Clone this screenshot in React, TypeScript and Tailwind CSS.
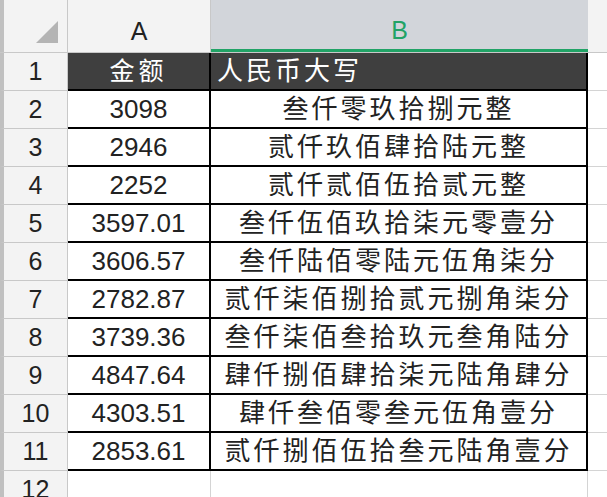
const rows: [string, string][] = [
  ["3098", "叁仟零玖拾捌元整"],
  ["2946", "贰仟玖佰肆拾陆元整"],
  ["2252", "贰仟贰佰伍拾贰元整"],
  ["3597.01", "叁仟伍佰玖拾柒元零壹分"],
  ["3606.57", "叁仟陆佰零陆元伍角柒分"],
  ["2782.87", "贰仟柒佰捌拾贰元捌角柒分"],
  ["3739.36", "叁仟柒佰叁拾玖元叁角陆分"],
  ["4847.64", "肆仟捌佰肆拾柒元陆角肆分"],
  ["4303.51", "肆仟叁佰零叁元伍角壹分"],
  ["2853.61", "贰仟捌佰伍拾叁元陆角壹分"],
];

export default function App() {
  const font = { fontFamily: '"Liberation Sans", "Noto Sans CJK SC", sans-serif' };
  return (
    <div className="w-[607px] h-[497px] overflow-hidden bg-white text-[25px] text-[#222]" style={font}>
      <div className="flex h-[53px] bg-[#f3f3f3] border-b border-[#c8c8c8]">
        <div className="w-[68px] border-r border-[#c8c8c8] border-l-4 border-l-[#c0c0c0] relative">
          <div className="absolute right-[9px] bottom-[9px] w-0 h-0 border-l-[22px] border-l-transparent border-b-[22px] border-b-[#b4b4b4]" />
        </div>
        <div className="w-[143px] border-r border-[#c8c8c8] flex items-end justify-center pb-[8px] leading-none">A</div>
        <div className="w-[377px] bg-[#d2d5da] border-b-[3px] border-[#21a366] flex items-end justify-center pb-[6px] text-[#21a366] leading-none">B</div>
        <div className="flex-1" />
      </div>
      {[0, ...rows.map((_, i) => i + 1), 11].map((i) => {
        const header = i === 0;
        const r = i >= 1 && i <= 10 ? rows[i - 1] : null;
        const empty = i === 11;
        return (
          <div key={i} className="flex h-[38px] leading-[36px]">
            <div className="w-[68px] bg-[#f3f3f3] border-r border-b border-[#c8c8c8] border-l-4 border-l-[#c0c0c0] text-center">{i + 1}</div>
            {empty ? (
              <>
                <div className="w-[143px] border-r border-b border-[#d4d4d4]" />
                <div className="w-[377px] border-r border-b border-[#d4d4d4]" />
              </>
            ) : (
              <>
                <div className={`w-[143px] border-b-2 border-black border-r-2 text-center ${header ? "bg-[#3f3f3f] text-white tracking-[4px]" : "text-[26px]"}`}>
                  {header ? "金额" : r![0]}
                </div>
                <div className={`w-[377px] border-b-2 border-r-2 border-black whitespace-nowrap text-[26px] tracking-[3px] ${header ? "bg-[#3f3f3f] text-white pl-[6px]" : "text-center"}`}>
                  {header ? "人民币大写" : r![1]}
                </div>
              </>
            )}
            <div className="flex-1 border-b border-[#d4d4d4]" />
          </div>
        );
      })}
    </div>
  );
}
